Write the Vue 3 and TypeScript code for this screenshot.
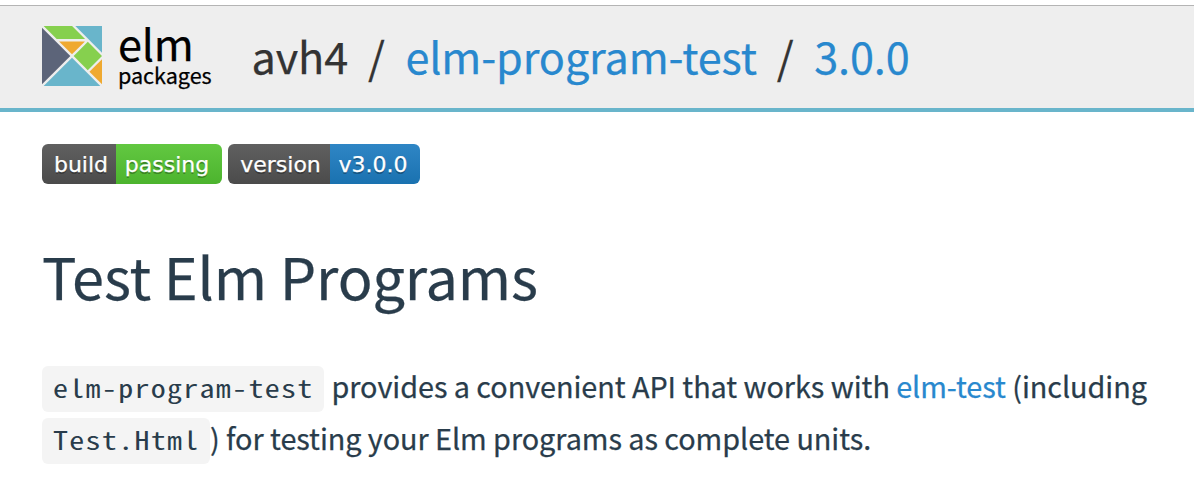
<script setup lang="ts">
interface Badge {
  label: string
  value: string
  kind: string
}

const badges: Badge[] = [
  { label: 'build', value: 'passing', kind: 'build' },
  { label: 'version', value: 'v3.0.0', kind: 'version' },
]
</script>

<template>
  <div class="page">
    <header class="header">
      <a class="brand">
        <svg class="logo" viewBox="0 0 323.3 323.3" aria-hidden="true">
          <polygon fill="#efa930" points="161.649,152.782 231.514,82.916 91.783,82.916" />
          <polygon fill="#86d04e" points="8.867,0 79.241,70.375 232.213,70.375 161.838,0" />
          <rect fill="#86d04e" x="192.99" y="107.392" width="107.676" height="108.167" transform="matrix(0.7071 0.7071 -0.7071 0.7071 186.4727 -127.2386)" />
          <polygon fill="#69b5cb" points="323.298,143.724 323.298,0 179.573,0" />
          <polygon fill="#5c6479" points="152.781,161.649 0,8.868 0,314.432" />
          <polygon fill="#efa930" points="255.522,246.655 323.298,314.432 323.298,178.879" />
          <polygon fill="#69b5cb" points="161.649,170.517 8.869,323.298 314.43,323.298" />
        </svg>
        <span class="brand-text">
          <span class="brand-name">elm</span>
          <span class="brand-sub">packages</span>
        </span>
      </a>
      <nav class="crumbs">
        <span class="author">avh4</span>
        <span class="slash">/</span>
        <a class="link project">elm-program-test</a>
        <span class="slash">/</span>
        <a class="link release">3.0.0</a>
      </nav>
    </header>
    <main class="content">
      <div class="badges">
        <span v-for="b in badges" :key="b.kind" class="badge" :class="b.kind">
          <span class="badge-label">{{ b.label }}</span>
          <span class="badge-value">{{ b.value }}</span>
        </span>
      </div>
      <h1>Test Elm Programs</h1>
      <div class="intro">
        <div class="line">
          <code class="code-package"><span>elm-program-test</span></code>
          <span class="line-one">provides a convenient API that works with <a class="link">elm-test</a> (including</span>
        </div>
        <div class="line">
          <code class="code-module"><span>Test.Html</span></code>
          <span class="line-two">) for testing your Elm programs as complete units.</span>
        </div>
      </div>
    </main>
  </div>
</template>

<style>
body {
  background: #fff;
}
</style>

<style scoped>
.page {
  width: 1194px;
  height: 498px;
  overflow: hidden;
  padding-top: 5px;
  box-sizing: border-box;
  background: #fff;
  color: #293c4b;
  font-family: "Noto Sans CJK SC", "Noto Sans", sans-serif;
  -webkit-text-stroke: 0.25px currentColor;
}
.header {
  box-sizing: border-box;
  height: 107px;
  border-top: 1px solid #b4b4b4;
  border-bottom: 4px solid #69b5cb;
  background: #eee;
  padding-left: 42px;
  display: flex;
  align-items: flex-start;
  white-space: nowrap;
}
.brand {
  display: flex;
  width: 210px;
  color: #000;
}
.logo {
  width: 60px;
  height: 60px;
  margin-top: 20px;
}
.brand-text {
  display: flex;
  flex-direction: column;
  margin: 16px 0 0 16px;
}
.brand-name {
  font-size: 43.2px;
  line-height: 40px;
  letter-spacing: -0.2px;
}
.brand-sub {
  font-size: 21.6px;
  line-height: 26px;
  letter-spacing: -0.04px;
}
.crumbs {
  display: flex;
  margin-top: 19px;
  font-size: 43.2px;
  line-height: 60px;
  color: #333;
  letter-spacing: -0.13px;
}
.author {
  margin-left: -0.5px;
}
.slash {
  margin: 0 20.6px 0 20px;
}
.link {
  color: #2888ce;
}
.content {
  padding: 32px 0 0 42px;
}
.badges {
  display: flex;
  gap: 6px;
  height: 40px;
}
.badge {
  display: flex;
  border-radius: 6px;
  overflow: hidden;
  color: #fff;
  font: 22px/41px "DejaVu Sans", sans-serif;
  text-shadow: 0 2px 0 rgba(1, 1, 1, 0.3);
}
.badge-label,
.badge-value {
  display: flex;
  justify-content: center;
  box-sizing: border-box;
  height: 40px;
}
.badge-label {
  background: linear-gradient(#606060, #4b4b4b);
}
.build .badge-label {
  width: 74px;
  padding-left: 4px;
}
.build .badge-value {
  width: 106px;
  padding-right: 4px;
  background: linear-gradient(#62c841, #4cb42e);
}
.version .badge-label {
  width: 102px;
  padding-left: 3px;
}
.version .badge-value {
  width: 90px;
  padding-right: 4px;
  background: linear-gradient(#2f86c5, #1a72b0);
}
h1 {
  margin: 50px 0 0;
  font-size: 57.6px;
  line-height: 82px;
  font-weight: 400;
  letter-spacing: -0.13px;
}
.intro {
  margin-top: 46px;
  font-size: 28.8px;
  line-height: 48px;
  letter-spacing: -0.05px;
  white-space: nowrap;
}
.line {
  display: flex;
  align-items: flex-start;
  height: 52px;
}
.line-one {
  margin-left: 7.5px;
}
code {
  flex: none;
  box-sizing: border-box;
  height: 46px;
  margin-top: 4px;
  padding-left: 11px;
  border-radius: 6px;
  background: #f4f4f4;
  font-family: "Noto Sans Mono CJK SC", "Liberation Mono", monospace;
  font-size: 25px;
  letter-spacing: 1.07px;
  line-height: 42px;
  -webkit-text-stroke: 0;
}
.code-package {
  width: 282px;
}
.code-module {
  width: 168px;
}
code span {
  display: block;
  width: max-content;
  transform: scaleX(1.2);
  transform-origin: left center;
}
</style>
